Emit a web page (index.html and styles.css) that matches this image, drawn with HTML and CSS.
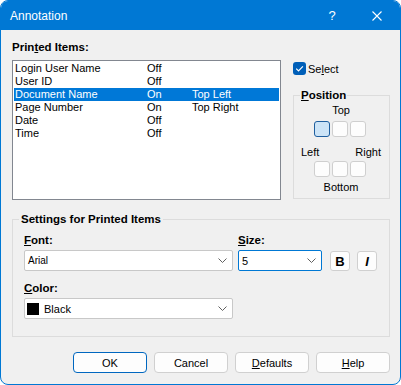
FILE: index.html
```html
<!DOCTYPE html>
<html lang="en">
<head>
    <meta charset="UTF-8">
    <title>Annotation</title>
    <link rel="stylesheet" href="styles.css">
</head>
<body>
    <div class="window">
        <header class="titlebar">
            <span class="title">Annotation</span>
            <span class="tb-btn help">?</span>
            <span class="tb-btn close">
                <svg width="10" height="10" viewBox="0 0 10 10"><path d="M0.5 0.5 L9.5 9.5 M9.5 0.5 L0.5 9.5" stroke="#fff" stroke-width="1.1" fill="none"/></svg>
            </span>
        </header>

        <main class="content">
            <section class="top">
                <div class="items">
                    <div class="group-label">Prin<u>t</u>ed Items:</div>
                    <div class="listbox">
                        <div class="row"><span>Login User Name</span><span>Off</span><span></span></div>
                        <div class="row"><span>User ID</span><span>Off</span><span></span></div>
                        <div class="row selected"><span>Document Name</span><span>On</span><span>Top Left</span></div>
                        <div class="row"><span>Page Number</span><span>On</span><span>Top Right</span></div>
                        <div class="row"><span>Date</span><span>Off</span><span></span></div>
                        <div class="row"><span>Time</span><span>Off</span><span></span></div>
                    </div>
                </div>

                <div class="side">
                    <label class="check">
                        <span class="check-box">
                            <svg width="13" height="13" viewBox="0 0 13 13"><path d="M3.2 6.6 L5.5 8.9 L9.9 4.3" stroke="#fff" stroke-width="1.2" fill="none"/></svg>
                        </span>
                        <span>Se<u>l</u>ect</span>
                    </label>

                    <fieldset class="position">
                        <legend><u>P</u>osition</legend>
                        <div class="pos-inner">
                            <div class="pos-top">Top</div>
                            <div class="squares">
                                <span class="sq on"></span><span class="sq"></span><span class="sq"></span>
                            </div>
                            <div class="lr"><span>Left</span><span>Right</span></div>
                            <div class="squares low">
                                <span class="sq"></span><span class="sq"></span><span class="sq"></span>
                            </div>
                            <div class="pos-bottom">Bottom</div>
                        </div>
                    </fieldset>
                </div>
            </section>

            <fieldset class="settings">
                <legend>Settings for Printed Items</legend>
                <div class="field-row">
                    <div class="field font-field">
                        <div class="field-label"><u>F</u>ont:</div>
                        <div class="combo"><span class="font-name">Arial</span>
                            <svg class="chev" width="9" height="5" viewBox="0 0 9 5"><path d="M0.5 0.5 L4.5 4.5 L8.5 0.5" stroke="#606060" stroke-width="1" fill="none"/></svg>
                        </div>
                    </div>
                    <div class="field size-field">
                        <div class="field-label"><u>S</u>ize:</div>
                        <div class="combo focused"><span>5</span>
                            <svg class="chev" width="9" height="5" viewBox="0 0 9 5"><path d="M0.5 0.5 L4.5 4.5 L8.5 0.5" stroke="#606060" stroke-width="1" fill="none"/></svg>
                        </div>
                    </div>
                    <button class="style-btn bold">B</button>
                    <button class="style-btn italic">I</button>
                </div>
                <div class="field color-field">
                    <div class="field-label"><u>C</u>olor:</div>
                    <div class="combo"><span class="swatch"></span><span>Black</span>
                        <svg class="chev" width="9" height="5" viewBox="0 0 9 5"><path d="M0.5 0.5 L4.5 4.5 L8.5 0.5" stroke="#606060" stroke-width="1" fill="none"/></svg>
                    </div>
                </div>
            </fieldset>

            <div class="buttons">
                <button class="btn default">OK</button>
                <button class="btn">Cancel</button>
                <button class="btn"><u>D</u>efaults</button>
                <button class="btn"><u>H</u>elp</button>
            </div>
        </main>
    </div>
</body>
</html>
```

FILE: styles.css
```css
body {
    margin: 0;
    background: #ffffff;
    font-family: "Liberation Sans", Arial, sans-serif;
    color: #000;
}

.window {
    width: 401px;
    height: 385px;
    box-sizing: border-box;
    border: 1px solid #0078d4;
    border-radius: 8px;
    background: #f0f0f0;
    overflow: hidden;
    display: flex;
    flex-direction: column;
}

/* title bar */
.titlebar {
    height: 29px;
    flex: none;
    background: #0078d4;
    color: #fff;
    display: flex;
    align-items: center;
    padding-left: 9px;
    font-size: 12px;
}

.title { flex: 1; }

.tb-btn {
    height: 29px;
    display: flex;
    align-items: center;
    justify-content: center;
}

.help {
    width: 44px;
    font-size: 13px;
}

.close { width: 46px; }

/* content */
.content {
    flex: 1;
    padding: 11px 10px 0 11px;
    display: flex;
    flex-direction: column;
}

.top {
    display: flex;
    gap: 12px;
}

.items { width: 269px; }

.group-label {
    font-weight: bold;
    font-size: 11.5px;
    line-height: 13px;
}

.listbox {
    margin-top: 6px;
    height: 140px;
    box-sizing: border-box;
    border: 1px solid #828790;
    background: #fff;
    padding: 1px;
}

.row {
    display: grid;
    grid-template-columns: 132px 45px 1fr;
    height: 13px;
    line-height: 13px;
    font-size: 11px;
    padding-left: 1px;
    white-space: nowrap;
}

.row.selected {
    background: #0078d7;
    color: #fff;
}

.side {
    width: 97px;
    padding-top: 21px;
}

.check {
    display: flex;
    align-items: center;
    gap: 2px;
    height: 13px;
    font-size: 11px;
}

.check-box {
    width: 13px;
    height: 13px;
    border-radius: 3px;
    background: #005fb8;
    display: flex;
}

/* Position group */
fieldset {
    margin: 0;
    min-width: 0;
    border: 1px solid #dcdcdc;
}

legend {
    font-weight: bold;
    font-size: 11.5px;
    line-height: 13px;
}

.position {
    margin-top: 14px;
    padding: 0 8px 4px 7px;
}

.position legend {
    padding: 0 1px;
    margin-left: -1px;
}

.pos-inner {
    display: flex;
    flex-direction: column;
    align-items: center;
    font-size: 11px;
    line-height: 13px;
}

.pos-top { margin-top: 2px; }

.squares {
    display: flex;
    gap: 2px;
    margin-top: 4px;
    margin-right: 3px;
}

.squares.low { margin-top: 2px; }

.sq {
    width: 16px;
    height: 16px;
    box-sizing: border-box;
    border: 1px solid #cfcfcf;
    border-radius: 3px;
    background: #fdfdfd;
}

.sq.on {
    background: #cce4f7;
    border-color: #1f5f9f;
}

.lr {
    align-self: stretch;
    display: flex;
    justify-content: space-between;
    margin-top: 9px;
}

.pos-bottom { margin-top: 4px; }

/* Settings group */
.settings {
    margin-top: 13px;
    padding: 8px 11px 17px 11px;
}

.settings legend {
    padding: 0 2px;
    margin-left: -5px;
}

.field-row {
    display: flex;
    align-items: flex-end;
}

.field-label {
    font-weight: bold;
    font-size: 11.5px;
    line-height: 13px;
    margin-bottom: 3px;
}

.font-field { width: 209px; }

.size-field {
    width: 84px;
    margin-left: 5px;
}

.color-field {
    width: 209px;
    margin-top: 11px;
}

.combo {
    height: 21px;
    box-sizing: border-box;
    border: 1px solid #c8c8c8;
    border-radius: 2px;
    background: #fff;
    display: flex;
    align-items: center;
    padding: 0 5px 0 3px;
    font-size: 11px;
}

.combo.focused { border-color: #0078d4; }

.font-name { font-size: 10px; }

.chev { margin-left: auto; }

.swatch {
    width: 12px;
    height: 12px;
    background: #000;
    margin-left: -1px;
    margin-right: 5px;
}

.style-btn {
    width: 20px;
    height: 20px;
    margin-left: 7px;
    margin-bottom: 0;
    padding: 0;
    box-sizing: border-box;
    border: 1px solid #d0d0d0;
    border-radius: 3px;
    background: #fdfdfd;
    font-family: "Liberation Sans", Arial, sans-serif;
    font-weight: bold;
    font-size: 13px;
    color: #000;
}

.style-btn.bold { margin-left: 8px; }
.style-btn.italic { font-style: italic; }

/* bottom buttons */
.buttons {
    display: flex;
    justify-content: flex-end;
    gap: 7px;
    margin-top: 15px;
}

.btn {
    width: 74px;
    height: 21px;
    padding: 0;
    box-sizing: border-box;
    border: 1px solid #d0d0d0;
    border-radius: 4px;
    background: #fdfdfd;
    font-family: "Liberation Sans", Arial, sans-serif;
    font-size: 11px;
    color: #000;
}

.btn.default { border-color: #0067c0; }
```
